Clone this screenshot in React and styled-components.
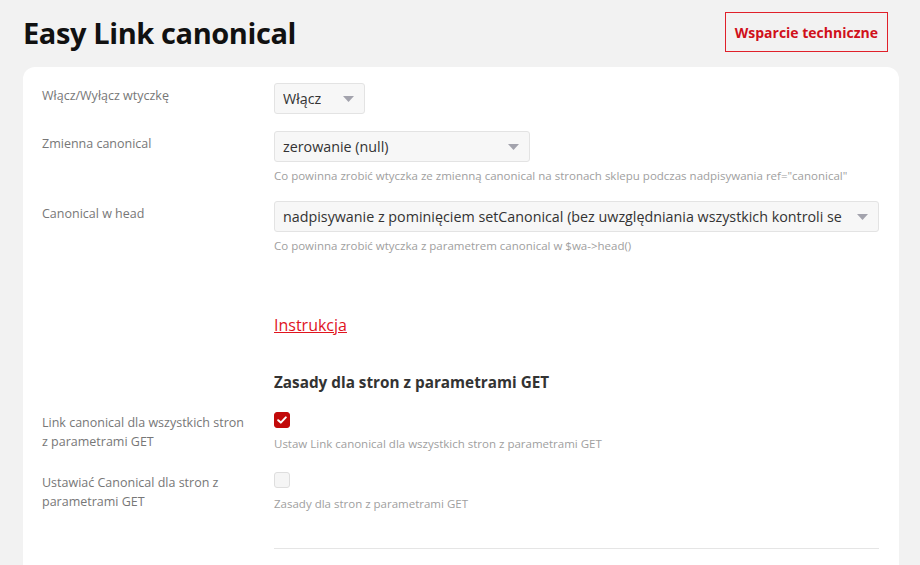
import React from "react";
import styled, { createGlobalStyle } from "styled-components";

const GlobalStyle = createGlobalStyle`
  html, body {
    margin: 0;
    padding: 0;
    background: #f2f2f2;
    font-family: "Open Sans", "Noto Sans", sans-serif;
    overflow: hidden;
  }
`;

const Page = styled.div`
  padding: 12px 21px 0 23px;
  height: 565px;
  box-sizing: border-box;
  overflow: hidden;
`;

const Header = styled.div`
  display: flex;
  justify-content: space-between;
  align-items: center;
  padding-right: 11px;
  margin-bottom: 15px;
`;

const Title = styled.h1`
  margin: 0;
  font-size: 29px;
  font-weight: 700;
  color: #111;
  letter-spacing: -0.4px;
`;

const SupportButton = styled.button`
  height: 40px;
  padding: 0 9px;
  background: transparent;
  border: 1px solid #e0202a;
  color: #d0101a;
  font-family: inherit;
  font-weight: 700;
  font-size: 14px;
  cursor: pointer;
`;

const Card = styled.div`
  background: #fff;
  border-radius: 12px 12px 0 0;
  padding: 16px 20px 30px 19px;
  min-height: 520px;
  box-sizing: border-box;
`;

const Row = styled.div`
  display: grid;
  grid-template-columns: 232px minmax(0, 1fr);
  margin-bottom: ${(p) => p.gap || 17}px;
`;

const Label = styled.div`
  font-size: 12.5px;
  line-height: 19px;
  color: #777;
  padding-top: 3px;
  padding-right: 28px;
`;

const Field = styled.div`
  display: flex;
  flex-direction: column;
  align-items: flex-start;
  min-width: 0;
`;

const Select = styled.div`
  position: relative;
  box-sizing: border-box;
  width: ${(p) => p.width || "100%"};
  height: 31px;
  padding: 0 36px 0 8px;
  background: #f7f7f7;
  border: 1px solid #e3e3e3;
  border-radius: 3px;
  display: flex;
  align-items: center;
  font-size: 14.3px;
  color: #333;
`;

const SelectText = styled.span`
  white-space: nowrap;
  overflow: hidden;
  min-width: 0;
`;

const Arrow = styled.svg`
  position: absolute;
  right: 10px;
  top: 12px;
`;

const Hint = styled.div`
  font-size: 11.5px;
  line-height: 17px;
  color: #a0a0a0;
  margin-top: ${(p) => p.top || 5}px;
`;

const LinkRow = styled.div`
  padding: 43px 0 0 232px;
`;

const Link = styled.a`
  font-size: 16px;
  line-height: 22px;
  color: #e0141e;
  text-decoration: underline;
`;

const SectionTitle = styled.h3`
  margin: 35px 0 17px 232px;
  font-size: 15.3px;
  line-height: 22px;
  font-weight: 700;
  color: #333;
`;

const Check = styled.span`
  box-sizing: border-box;
  display: inline-flex;
  align-items: center;
  justify-content: center;
  width: 16px;
  height: 16px;
  margin-top: 2px;
  border-radius: 3px;
  background: ${(p) => (p.on ? "#c20a0a" : "#f5f5f5")};
  border: 1px solid ${(p) => (p.on ? "#c20a0a" : "#dedede")};
`;

const Divider = styled.hr`
  margin: 36px 0 0 232px;
  border: 0;
  border-top: 1px solid #e5e5e5;
`;

const Caret = () => (
  <Arrow width="11" height="6" viewBox="0 0 11 6">
    <path d="M0 0 L11 0 L5.5 6 Z" fill="#a3a3ad" />
  </Arrow>
);

export default function App() {
  return (
    <Page>
      <GlobalStyle />
      <Header>
        <Title>Easy Link canonical</Title>
        <SupportButton>Wsparcie techniczne</SupportButton>
      </Header>
      <Card>
        <Row>
          <Label>Włącz/Wyłącz wtyczkę</Label>
          <Field>
            <Select width="91px">
              <SelectText>Włącz</SelectText>
              <Caret />
            </Select>
          </Field>
        </Row>
        <Row>
          <Label>Zmienna canonical</Label>
          <Field>
            <Select width="256px">
              <SelectText>zerowanie (null)</SelectText>
              <Caret />
            </Select>
            <Hint>
              Co powinna zrobić wtyczka ze zmienną canonical na stronach sklepu
              podczas nadpisywania ref="canonical"
            </Hint>
          </Field>
        </Row>
        <Row gap={0}>
          <Label>Canonical w head</Label>
          <Field>
            <Select>
              <SelectText>
                nadpisywanie z pominięciem setCanonical (bez uwzględniania
                wszystkich kontroli setCanonical)
              </SelectText>
              <Caret />
            </Select>
            <Hint>Co powinna zrobić wtyczka z parametrem canonical w $wa-&gt;head()</Hint>
          </Field>
        </Row>
        <LinkRow>
          <Link href="#">Instrukcja</Link>
        </LinkRow>
        <SectionTitle>Zasady dla stron z parametrami GET</SectionTitle>
        <Row gap={18}>
          <Label>Link canonical dla wszystkich stron z parametrami GET</Label>
          <Field>
            <Check on>
              <svg width="10" height="8" viewBox="0 0 10 8">
                <path
                  d="M1.2 4.2 L3.8 6.6 L8.8 1.4"
                  fill="none"
                  stroke="#fff"
                  strokeWidth="2"
                  strokeLinecap="round"
                  strokeLinejoin="round"
                />
              </svg>
            </Check>
            <Hint top={7}>Ustaw Link canonical dla wszystkich stron z parametrami GET</Hint>
          </Field>
        </Row>
        <Row gap={0}>
          <Label>Ustawiać Canonical dla stron z parametrami GET</Label>
          <Field>
            <Check />
            <Hint top={7}>Zasady dla stron z parametrami GET</Hint>
          </Field>
        </Row>
        <Divider />
      </Card>
    </Page>
  );
}
